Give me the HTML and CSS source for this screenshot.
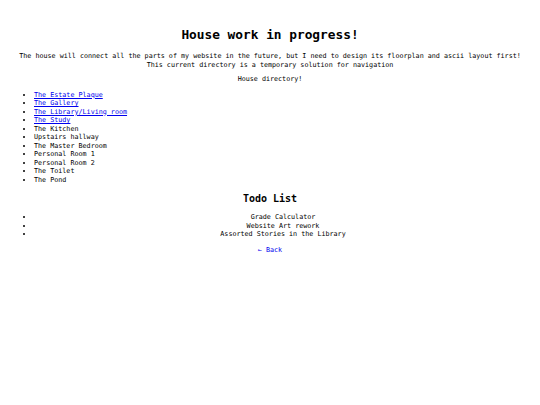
FILE: index.html
```html
<!DOCTYPE html>
<html>
<head>
<meta charset="utf-8">
<link rel="stylesheet" href="styles.css">
</head>
<body>
<h1 class="title">House work in progress!</h1>
<p class="intro">The house will connect all the parts of my website in the future, but I need to design its floorplan and ascii layout first!<br>This current directory is a temporary solution for navigation</p>
<p class="dir">House directory!</p>
<ul class="rooms">
<li><a href="#">The Estate Plaque</a></li>
<li><a href="#">The Gallery</a></li>
<li><a href="#">The Library/Living room</a></li>
<li><a href="#">The Study</a></li>
<li>The Kitchen</li>
<li>Upstairs hallway</li>
<li>The Master Bedroom</li>
<li>Personal Room 1</li>
<li>Personal Room 2</li>
<li>The Toilet</li>
<li>The Pond</li>
</ul>
<h2 class="todo-title">Todo List</h2>
<ul class="todo">
<li>Grade Calculator</li>
<li>Website Art rework</li>
<li>Assorted Stories in the Library</li>
</ul>
<p class="back"><a href="#">← Back</a></p>
</body>
</html>
```
FILE: styles.css
```css
html, body {
  background: #ffffff;
}
body {
  margin: 8px;
  font-family: "DejaVu Sans Mono", "Liberation Mono", monospace;
  font-size: 6.73px;
  line-height: 8.5px;
  color: #000000;
}
a {
  color: #0000ee;
}
.title {
  font-size: 12.8px;
  line-height: 15px;
  font-weight: bold;
  text-align: center;
  margin: 18.5px 0 10px;
}
.intro {
  text-align: center;
  margin: 0;
  line-height: 9px;
}
.dir {
  text-align: center;
  margin: 5px 0 7.5px;
}
.rooms {
  margin: 0;
  padding-left: 26px;
}
.todo-title {
  font-size: 10px;
  line-height: 12px;
  font-weight: bold;
  text-align: center;
  margin: 9px 0 8px;
}
.todo {
  margin: 0;
  padding-left: 26px;
  text-align: center;
}
.back {
  text-align: center;
  margin: 7.5px 0 0;
}
.back a {
  text-decoration: none;
}
```
